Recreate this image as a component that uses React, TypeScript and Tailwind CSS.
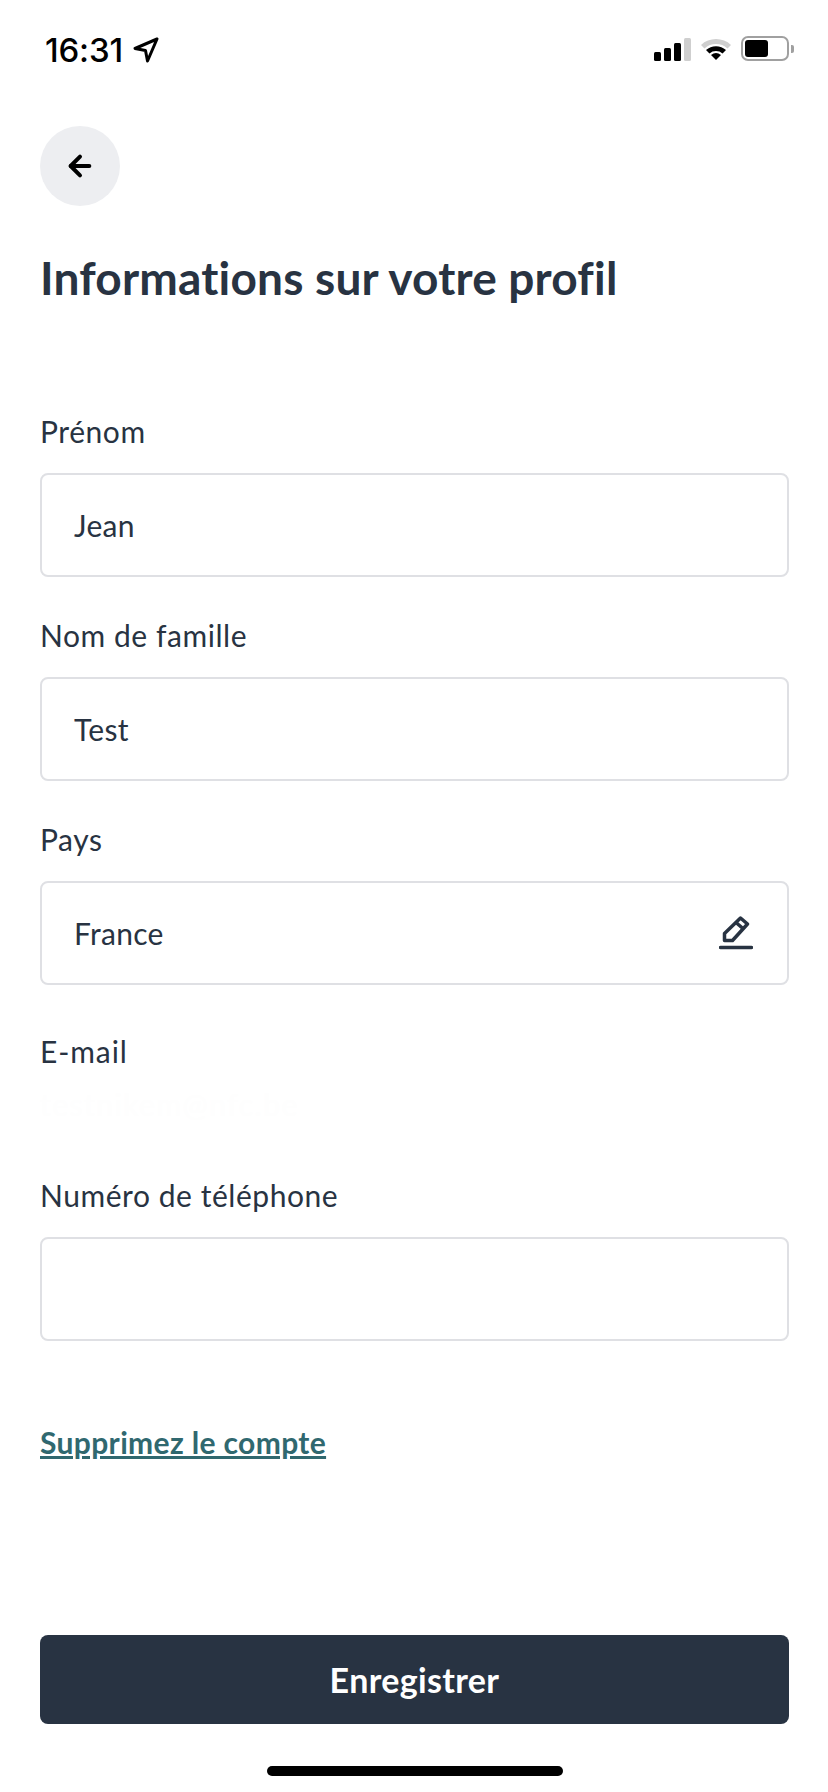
import { ArrowLeft } from "lucide-react";

const font = { fontFamily: '"Lato", "Noto Sans", sans-serif' };

function StatusBar() {
  return (
    <div className="h-[100px] flex items-start justify-between pl-[45px] pr-[34px] pt-[30px]">
      <div className="flex items-center gap-[10px]">
        <span className="text-[33px] leading-[40px] font-medium text-black tracking-[-0.2px] font-['Inter',sans-serif]">16:31</span>
        <svg width="26" height="26" viewBox="0 0 26 26" fill="none" stroke="#000" strokeWidth="3" strokeLinejoin="round">
          <path d="M24 2 L2 11.5 L12.5 13.5 L14.5 24 Z" />
        </svg>
      </div>
      <div className="flex items-center gap-[9px] pt-[6px]">
        <div className="flex items-end gap-[3px] h-[24px]">
          <div className="w-[7px] h-[9px] bg-black rounded-[1.5px]" />
          <div className="w-[7px] h-[13px] bg-black rounded-[1.5px]" />
          <div className="w-[7px] h-[18px] bg-black rounded-[1.5px]" />
          <div className="w-[7px] h-[23px] bg-[#cfcfcf] rounded-[1.5px]" />
        </div>
        <svg width="32" height="24" viewBox="0 0 32 24">
          <path d="M1 8 A22 22 0 0 1 31 8 L27.5 11.5 A17 17 0 0 0 4.5 11.5 Z" fill="#cfcfcf" />
          <path d="M6 13 A15 15 0 0 1 26 13 L22.5 16.5 A10 10 0 0 0 9.5 16.5 Z" fill="#000" />
          <path d="M11 18 A8 8 0 0 1 21 18 L16 23 Z" fill="#000" />
        </svg>
        <div className="flex items-center gap-[2px]">
          <div className="w-[48px] h-[25px] rounded-[7px] border-[2px] border-[#a0a0a0] p-[2px]">
            <div className="w-[23px] h-full bg-black rounded-[3px]" />
          </div>
          <div className="w-[3px] h-[8px] bg-[#a0a0a0] rounded-r-[2px]" />
        </div>
      </div>
    </div>
  );
}

function Field({ label, value, icon }: { label: string; value?: string; icon?: boolean }) {
  return (
    <div className="mb-[41px]">
      <div className="text-[30px] leading-[34px] tracking-[0.55px] text-[#283342] mb-[25px]">{label}</div>
      <div className="h-[104px] border-2 border-[#dfe0e4] rounded-[8px] bg-white flex items-center justify-between pl-[32px] pr-[34px]">
        <span className="text-[30px] tracking-[0.3px] text-[#283342]">{value}</span>
        {icon && (
          <svg width="34" height="34" viewBox="0 0 34 34" fill="none" stroke="#283342" strokeWidth="3.5">
            <path d="M5.5 24.5 V17.5 L21.5 2 L28.5 8 L13.5 24.5 Z" strokeLinejoin="round" />
            <path d="M17 6.5 L24.5 13" />
            <path d="M1.5 31.5 H32.5" strokeLinecap="round" />
          </svg>
        )}
      </div>
    </div>
  );
}

export default function App() {
  return (
    <div className="w-[828px] h-[1792px] bg-white flex flex-col [font-variant-ligatures:none]" style={font}>
      <StatusBar />
      <div className="flex-1 flex flex-col pl-[40px] pr-[39px] pt-[26px]">
        <button className="w-[80px] h-[80px] rounded-full bg-[#edeef1] flex items-center justify-center">
          <ArrowLeft size={32} color="#000" strokeWidth={3} />
        </button>
        <h1 className="mt-[43px] mb-[107px] text-[46px] leading-[58px] tracking-[0.2px] font-bold text-[#283342]">Informations sur votre profil</h1>
        <Field label="Prénom" value="Jean" />
        <Field label="Nom de famille" value="Test" />
        <Field label="Pays" value="France" icon />
        <div className="mt-[8px] text-[30px] leading-[34px] tracking-[0.9px] text-[#283342]">E-mail</div>
        {/* value is almost invisible in the source */}
        <div className="mt-[19px] mb-[57px] text-[30px] leading-[34px] tracking-[1.5px] text-[#fefefe]">testnikem@nfc.be</div>
        <Field label="Numéro de téléphone" />
        <a className="mt-[41px] text-[30px] leading-[38px] tracking-[0.35px] font-bold text-[#30686f] underline">Supprimez le compte</a>
        <button className="mt-auto h-[89px] rounded-[8px] bg-[#283342] text-white text-[34px] tracking-[0.35px] font-bold">Enregistrer</button>
        <div className="self-center mt-[42px] mb-[16px] w-[296px] h-[10px] rounded-full bg-black" />
      </div>
    </div>
  );
}
